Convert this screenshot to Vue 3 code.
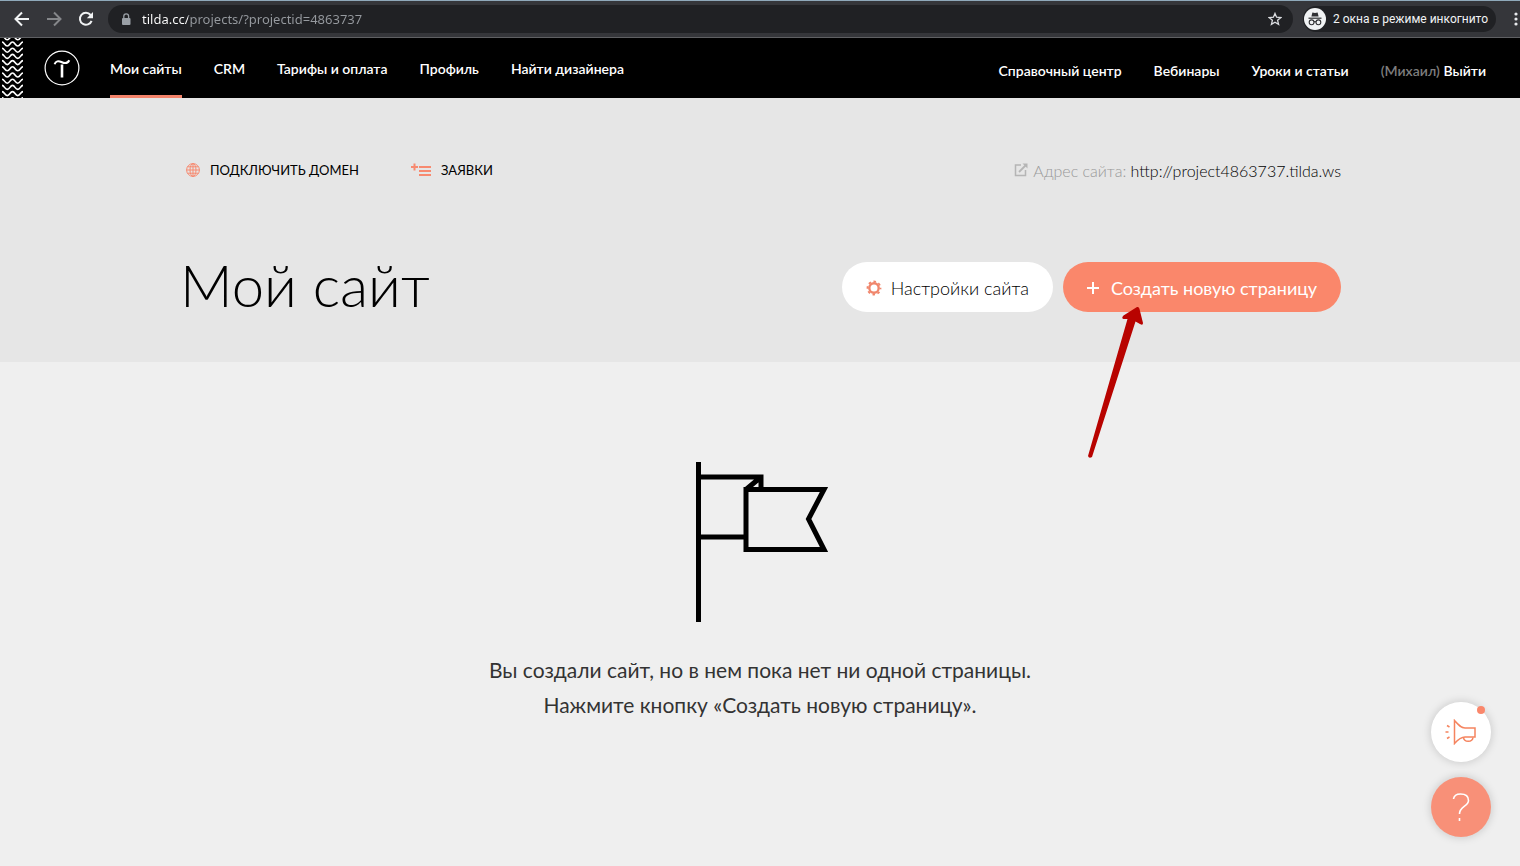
<script setup>
import { ref } from 'vue'

const address = ref('tilda.cc/projects/?projectid=4863737')

const mainLinks = ['Мои сайты', 'CRM', 'Тарифы и оплата', 'Профиль', 'Найти дизайнера']
const helpLinks = ['Справочный центр', 'Вебинары', 'Уроки и статьи']
</script>

<template>
  <div class="page">
    <div class="browser">
      <button class="tool" aria-label="Назад">
        <svg width="16" height="16" viewBox="0 0 16 16"><path d="M15 8H2M8 1.5L1.5 8L8 14.5" fill="none" stroke="#f1f3f4" stroke-width="2" /></svg>
      </button>
      <button class="tool" aria-label="Вперёд">
        <svg width="16" height="16" viewBox="0 0 16 16"><path d="M1 8H14M8 1.5L14.5 8L8 14.5" fill="none" stroke="#85878a" stroke-width="2" /></svg>
      </button>
      <button class="tool" aria-label="Обновить">
        <svg width="16" height="16" viewBox="0 0 16 16">
          <path d="M13.6 9.8A6 6 0 1 1 12.6 4" fill="none" stroke="#f1f3f4" stroke-width="2" />
          <path d="M15 1V7.2H8.8Z" fill="#f1f3f4" />
        </svg>
      </button>
      <div class="address">
        <svg width="10" height="13" viewBox="0 0 10 13">
          <rect x="1" y="5" width="8.5" height="7" rx="1" fill="#9aa0a6" />
          <path d="M2.8 5V3.2a2.4 2.4 0 0 1 4.8 0V5" fill="none" stroke="#9aa0a6" stroke-width="1.3" />
        </svg>
        <input v-model="address" class="url" type="text" aria-label="Адресная строка" />
        <button class="star" aria-label="Добавить в закладки">
          <svg width="14" height="14" viewBox="0 0 14 14"><path d="M7 1.4L8.6 5.2L12.8 5.6L9.6 8.3L10.6 12.4L7 10.2L3.4 12.4L4.4 8.3L1.2 5.6L5.4 5.2Z" fill="none" stroke="#dadce0" stroke-width="1.3" /></svg>
        </button>
      </div>
      <button class="incognito">
        <svg width="22" height="22" viewBox="0 0 22 22">
          <circle cx="11" cy="11" r="11" fill="#f1f3f4" />
          <path d="M7.4 8.4L8.4 4.4L11 5L13.6 4.4L14.6 8.4Z" fill="#303134" />
          <path d="M4.5 10.2H17.5" stroke="#303134" stroke-width="1.2" />
          <g fill="none" stroke="#303134" stroke-width="1.1">
            <circle cx="7.6" cy="14.3" r="2.4" /><circle cx="14.4" cy="14.3" r="2.4" /><path d="M10 14Q11 13.2 12 14" />
          </g>
        </svg>
        2 окна в режиме инкогнито
      </button>
      <button class="more" aria-label="Меню браузера">
        <svg width="4" height="14" viewBox="0 0 4 14" fill="#e8eaed"><circle cx="2" cy="2" r="1.6" /><circle cx="2" cy="7" r="1.6" /><circle cx="2" cy="12" r="1.6" /></svg>
      </button>
    </div>

    <header class="header">
      <svg class="waves" width="23" height="60" viewBox="0 0 23 60" fill="none" stroke="#fff" stroke-width="1.6">
        <path
          v-for="n in 11"
          :key="n"
          :transform="`translate(2 ${n * 6.2 - 8.4})`"
          d="M0 0C2.400 0 2.700 4 5.250 4S8.100 0 10.500 0S13.200 4 15.750 4S18.600 0 21 0"
        />
      </svg>
      <a class="logo" href="#" aria-label="Tilda">
        <svg width="36" height="36" viewBox="0 0 36 36" fill="none" stroke="#fff">
          <circle cx="18" cy="18" r="16.900" stroke-width="1.200" />
          <path d="M10.600 14.300C11.600 11 14.400 10.600 17.400 12S23.700 13.700 25.300 10.300" stroke-width="2" />
          <path d="M18 14.500V27.500" stroke-width="2.600" />
        </svg>
      </a>
      <nav class="main-nav">
        <a v-for="(link, i) in mainLinks" :key="link" href="#" :class="{ current: i === 0 }">{{ link }}</a>
      </nav>
      <nav class="help-nav">
        <a v-for="link in helpLinks" :key="link" href="#">{{ link }}</a>
        <span class="user">(Михаил) <a href="#">Выйти</a></span>
      </nav>
    </header>

    <section class="hero">
      <div class="wrap">
        <div class="row info">
          <a class="caps" href="#">
            <svg width="14" height="14" viewBox="0 0 14 14" fill="none" stroke="#f78a70">
              <circle cx="7" cy="7" r="6.400" /><ellipse cx="7" cy="7" rx="3" ry="6.400" /><path d="M7 .6V13.400M.6 7H13.400M1.500 3.800H12.500M1.500 10.200H12.500" />
            </svg>
            ПОДКЛЮЧИТЬ ДОМЕН
          </a>
          <a class="caps leads" href="#">
            <svg width="20" height="14" viewBox="0 0 20 14" stroke="#f78a70" stroke-width="2"><path d="M8 4H20M8 8H20M8 12H20M0 4H7M3.500 .5V7.500" /></svg>
            ЗАЯВКИ
          </a>
          <p class="site">
            <svg width="14" height="14" viewBox="0 0 14 14" fill="none" stroke="#b5b5b5" stroke-width="1.500">
              <path d="M7 2H1.500V12.500H11.500V7" /><path d="M5 9L12 2" stroke-width="1.800" /><path d="M8.500 .5H13.500V5.500Z" fill="#b5b5b5" stroke="none" />
            </svg>
            <span>Адрес сайта: <a href="#">http://project4863737.tilda.ws</a></span>
          </p>
        </div>
        <div class="row title-row">
          <h1>Мой сайт</h1>
          <button class="pill settings">
            <svg width="16" height="16" viewBox="0 0 16 16" fill="none" stroke="#f0866c">
              <circle cx="8" cy="8" r="4.700" stroke-width="2.400" />
              <circle cx="8" cy="8" r="6.500" stroke-width="1.800" stroke-dasharray="2.550 2.550" stroke-dashoffset="1.275" />
            </svg>
            Настройки сайта
          </button>
          <div class="create-box">
            <button class="pill create">
              <svg width="12" height="12" viewBox="0 0 12 12"><path d="M0 6H12M6 0V12" stroke="#fff" stroke-width="2" /></svg>
              Создать новую страницу
            </button>
            <svg class="arrow" width="60" height="156" viewBox="0 0 60 156">
              <path d="M53 1Q55 .5 55.500 3L59 17Q59 20 56 18L51.500 15.500L8 151Q5 153 4 150L43.500 13L39.500 13Q37 12 39.500 9.500Z" fill="#b80300" />
            </svg>
          </div>
        </div>
      </div>
    </section>

    <main class="empty">
      <svg width="136" height="160" viewBox="-4 0 136 160" fill="none" stroke="#000" stroke-width="5">
        <path d="M2.500 0V160M5 15H65V27M5 75H50M65 15L50 27.500" />
        <path d="M50 27.500H128L112.500 57L128 87.500H50Z" />
      </svg>
      <p>Вы создали сайт, но в нем пока нет ни одной страницы.<br />Нажмите кнопку «Создать новую страницу».</p>
    </main>

    <div class="floats">
      <button class="round news" aria-label="Новости">
        <svg width="32" height="26" viewBox="0 0 32 26" fill="none" stroke="#f5845f" stroke-width="1.500">
          <path d="M9.500 1.500V24.500C13.500 20 16 18 20 18H30V9H20C16 9 13.500 6 9.500 1.500Z" />
          <path d="M18.500 18.500C19 23.500 27.500 23.500 28 18.500" />
          <path d="M2 6.500L4.500 8M.5 13H3.500M2 19.500L4.500 18" />
        </svg>
        <span class="badge"></span>
      </button>
      <button class="round help" aria-label="Помощь">
        <svg width="18" height="28" viewBox="0 0 18 28" fill="none" stroke="#fff" stroke-width="1.600">
          <path d="M1.500 6C2 2.500 5 1 8.500 1C13 1 16.500 3 16.500 7.500C16.500 13.500 7.500 13 7.500 21M7.500 25V28" />
        </svg>
      </button>
    </div>
  </div>
</template>

<style>
body {
  background: #efefef;
}
</style>

<style scoped>
.page {
  position: relative;
  min-height: 100vh;
  box-sizing: border-box;
  display: flex;
  flex-direction: column;
  font-family: Lato, "Open Sans", sans-serif;
  color: #000;
}
a {
  color: inherit;
  text-decoration: none;
}
button {
  border: 0;
  padding: 0;
  background: none;
  color: inherit;
  font: inherit;
  display: flex;
  align-items: center;
  cursor: pointer;
}
svg {
  flex: none;
  display: block;
}
h1,
p {
  margin: 0;
}

.browser {
  display: flex;
  align-items: center;
  height: 38px;
  box-sizing: border-box;
  padding-left: 14px;
  background: #35363a;
  border-top: 1px solid #8fa9ba;
  border-bottom: 1px solid #5f6063;
  font-family: "Noto Sans", "Open Sans", sans-serif;
}
.tool {
  width: 16px;
  margin-right: 16px;
}
.address {
  flex: 1;
  display: flex;
  align-items: center;
  height: 28px;
  margin-left: -2px;
  padding: 0 11px 0 13px;
  border-radius: 14px;
  background: #202124;
}
.url {
  flex: 1;
  min-width: 0;
  margin-left: 11px;
  padding: 0;
  border: 0;
  outline: 0;
  font-family: inherit;
  font-size: 13px;
  line-height: 20px;
  color: transparent;
  background: linear-gradient(90deg, #fff 46px, #969a9f 46px);
  -webkit-background-clip: text;
  background-clip: text;
}
.incognito {
  height: 26px;
  margin-left: 10px;
  padding: 0 8px 0 1px;
  gap: 7px;
  border-radius: 13px;
  background: #202124;
  color: #f1f3f4;
  font-family: Roboto, sans-serif;
  font-size: 12px;
  white-space: nowrap;
}
.more {
  margin-left: 18px;
  width: 6px;
}

.header {
  display: flex;
  align-items: center;
  height: 60px;
  background: #000;
  color: #fff;
  font-size: 14px;
  font-weight: 600;
  line-height: 20px;
  white-space: nowrap;
}
.logo {
  margin: 0 30px 0 21px;
}
.main-nav,
.help-nav {
  display: flex;
  gap: 32px;
}
.main-nav a {
  padding: 21px 0 16px;
  border-bottom: 3px solid transparent;
}
.main-nav .current {
  border-color: #f4846b;
}
.help-nav {
  margin-left: auto;
  padding: 6px 34px 0 0;
}
.user {
  color: #7d7d7d;
}
.user a {
  color: #fff;
}

.hero {
  background: #e6e6e6;
  padding: 60px 0 50px;
}
.wrap {
  max-width: 1155px;
  margin: 0 auto;
  padding-left: 7px;
}
.row {
  display: flex;
  align-items: center;
}
.info {
  height: 24px;
}
.caps {
  display: flex;
  align-items: center;
  gap: 10px;
  font-size: 13px;
}
.leads {
  margin-left: 52px;
}
.site {
  display: flex;
  align-items: center;
  gap: 5px;
  margin-left: auto;
  font-size: 16px;
  font-weight: 300;
  color: #999;
}
.site a {
  color: #000;
}
.title-row {
  margin-top: 80px;
  height: 50px;
}
h1 {
  margin-right: auto;
  margin-left: -6px;
  padding-bottom: 4px;
  font-size: 58px;
  line-height: 60px;
  font-weight: 300;
}
.pill {
  height: 50px;
  padding: 2px 24px 0;
  border-radius: 25px;
  font-size: 18px;
  white-space: nowrap;
}
.settings {
  gap: 9px;
  background: #fff;
  font-weight: 300;
}
.create-box {
  position: relative;
  margin-left: 10px;
}
.create {
  gap: 12px;
  background: #fa876b;
  color: #fff;
}
.arrow {
  position: absolute;
  left: 21px;
  top: 44px;
  pointer-events: none;
}

.empty {
  flex: 1;
  display: flex;
  flex-direction: column;
  align-items: center;
  padding: 100px 0 60px;
}
.empty p {
  margin-top: 30px;
  font-size: 21px;
  line-height: 35px;
  text-align: center;
  color: #333;
}

.floats {
  position: fixed;
  right: 29px;
  bottom: 29px;
  display: flex;
  flex-direction: column;
  gap: 15px;
}
.round {
  position: relative;
  justify-content: center;
  width: 60px;
  height: 60px;
  border-radius: 50%;
  box-shadow: 0 0 10px rgba(0, 0, 0, 0.18);
}
.news {
  background: #fff;
}
.help {
  background: #f89078;
}
.badge {
  position: absolute;
  top: 4px;
  right: 6px;
  width: 8px;
  height: 8px;
  border-radius: 50%;
  background: #fa876b;
}
</style>
